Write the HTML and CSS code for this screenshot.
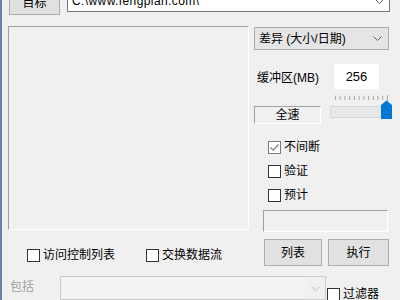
FILE: index.html
```html
<!DOCTYPE html>
<html lang="zh-CN">
<head>
    <meta charset="UTF-8">
    <title>复制</title>
    <link rel="stylesheet" href="styles.css">
</head>
<body>

    <div class="target-row">
        <button class="btn btn-target">目标</button>
        <div class="path-combo">
            <span class="path-text">C:\www.fengpian.com\</span>
            <svg class="chevron" width="9" height="5" viewBox="0 0 9 5"><path d="M0.5 0.5 L4.5 4.5 L8.5 0.5" fill="none" stroke="#606060"/></svg>
        </div>
    </div>

    <div class="main">
        <div class="left-col">
            <div class="panel sunken"></div>
            <div class="options">
                <label class="check"><span class="box"></span>访问控制列表</label>
                <label class="check"><span class="box"></span>交换数据流</label>
            </div>
        </div>

        <div class="side">
            <div class="mode-combo">
                <span>差异 (大小/日期)</span>
                <svg class="chevron" width="9" height="5" viewBox="0 0 9 5"><path d="M0.5 0.5 L4.5 4.5 L8.5 0.5" fill="none" stroke="#606060"/></svg>
            </div>

            <div class="buffer-row">
                <span class="buffer-label">缓冲区(MB)</span>
                <div class="num-box">256</div>
            </div>

            <div class="speed-row">
                <div class="speed sunken">全速</div>
                <svg class="slider" width="62" height="25" viewBox="0 0 62 25">
                    <g stroke="#a8a8a8" stroke-width="1">
                        <path d="M5.5 1 V5 M10.2 1 V5 M14.9 1 V5 M19.7 1 V5 M24.4 1 V5 M29.1 1 V5 M33.8 1 V5 M38.6 1 V5 M43.3 1 V5 M48 1 V5 M52.7 1 V5"/>
                        <path d="M57.5 0 V6"/>
                    </g>
                    <rect x="0.5" y="11.5" width="54" height="11" fill="#e7e7e7" stroke="#d6d6d6"/>
                    <path d="M51 10 L56.5 5.5 L62 10 V24 H51 Z" fill="#0078d7"/>
                </svg>
            </div>

            <div class="checks">
                <label class="check checked"><span class="box"><svg width="11" height="11" viewBox="0 0 11 11"><path d="M1.5 5.5 L4.2 8.2 L9.5 2.5" fill="none" stroke="#7a7a7a" stroke-width="1.2"/></svg></span>不间断</label>
                <label class="check"><span class="box"></span>验证</label>
                <label class="check"><span class="box"></span>预计</label>
            </div>

            <div class="status sunken"></div>

            <div class="actions">
                <button class="btn btn-list">列表</button>
                <button class="btn btn-run">执行</button>
            </div>
        </div>
    </div>

    <div class="filter-row">
        <span class="muted">包括</span>
        <div class="filter-combo">
            <div class="filter-field"></div>
            <svg class="chevron" width="9" height="5" viewBox="0 0 9 5"><path d="M0.5 0.5 L4.5 4.5 L8.5 0.5" fill="none" stroke="#bcbcbc"/></svg>
        </div>
        <label class="check filter-check"><span class="box"></span>过滤器</label>
    </div>

</body>
</html>
```

FILE: styles.css
```css
body {
    margin: 0;
    width: 398px;
    height: 300px;
    overflow: hidden;
    background-color: #f0f0f0;
    border-left: 2px solid #6d7fa5; /* window frame edge */
    font-family: "Liberation Sans", "Noto Sans CJK SC", sans-serif;
    font-size: 12px;
    color: #000000;
}

.btn {
    box-sizing: border-box;
    padding: 0;
    background-color: #e1e1e1;
    border: 1px solid #adadad;
    font-family: "Liberation Sans", "Noto Sans CJK SC", sans-serif;
    font-size: 12px;
    color: #000000;
    line-height: 14px;
}

.sunken {
    box-sizing: border-box;
    border-top: 1px solid #a0a0a0;
    border-left: 1px solid #a0a0a0;
    border-right: 1px solid #ffffff;
    border-bottom: 1px solid #ffffff;
}

.chevron {
    display: block;
}

/* top row, scrolled partly out of view */
.target-row {
    display: flex;
    align-items: flex-start;
    margin-top: -10px;
    padding-left: 7px;
    gap: 7px;
}

.btn-target {
    width: 51px;
    height: 24px;
    margin-top: 1px;
}

.path-combo {
    box-sizing: border-box;
    display: flex;
    align-items: center;
    justify-content: space-between;
    width: 323px;
    height: 22px;
    padding: 0 5px 0 4px;
    background-color: #ffffff;
    border: 1px solid #7a7a7a;
}

.path-text {
    line-height: 14px;
    letter-spacing: 0.4px;
}

.main {
    display: flex;
    align-items: flex-start;
    gap: 5px;
    margin-top: 11px;
    padding-left: 6px;
}

.left-col {
    width: 241px;
}

.panel {
    height: 204px;
}

.options {
    display: grid;
    grid-template-columns: 119px auto;
    margin-top: 19px;
    padding-left: 19px;
}

.check {
    display: flex;
    align-items: center;
    height: 13px;
    line-height: 13px;
    white-space: nowrap;
}

.check .box {
    box-sizing: border-box;
    display: flex;
    align-items: center;
    justify-content: center;
    width: 13px;
    height: 13px;
    margin-right: 3px;
    background-color: #ffffff;
    border: 1px solid #333333;
}

.check.checked .box {
    border-color: #7a7a7a;
}

.side {
    display: flex;
    flex-direction: column;
    align-items: flex-start;
    width: 136px;
}

.mode-combo {
    box-sizing: border-box;
    display: flex;
    align-items: center;
    justify-content: space-between;
    width: 135px;
    height: 23px;
    margin-top: 1px;
    padding: 0 6px 0 4px;
    background-color: #e5e5e5;
    border: 1px solid #acacac;
    line-height: 14px;
}

.buffer-row {
    display: flex;
    align-items: center;
    margin-top: 14px;
    height: 25px;
}

.buffer-label {
    width: 77px;
    padding-left: 3px;
}

.num-box {
    width: 45px;
    height: 25px;
    line-height: 25px;
    text-align: center;
    font-size: 13px;
    background-color: #ffffff;
}

.speed-row {
    display: flex;
    align-items: flex-start;
    margin-top: 6px;
}

.speed {
    width: 67px;
    height: 18px;
    margin-top: 11px;
    line-height: 16px;
    text-align: center;
}

.slider {
    display: block;
    margin-left: 9px;
    overflow: visible;
}

.checks {
    display: flex;
    flex-direction: column;
    gap: 11px;
    margin-top: 17px;
    padding-left: 14px;
}

.status {
    width: 125px;
    height: 22px;
    margin-top: 8px;
    margin-left: 9px;
}

.actions {
    display: flex;
    gap: 6px;
    margin-top: 7px;
    margin-left: 10px;
}

.btn-list {
    width: 58px;
    height: 27px;
}

.btn-run {
    width: 61px;
    height: 27px;
}

.filter-row {
    display: flex;
    align-items: flex-start;
    margin-top: 10px;
    padding-left: 8px;
}

.muted {
    width: 26px;
    margin-top: 4px;
    line-height: 14px;
    color: #a0a0a0;
}

.filter-combo {
    box-sizing: border-box;
    display: flex;
    align-items: center;
    width: 266px;
    height: 24px;
    margin-left: 24px;
    padding: 1px 5px 1px 1px;
    border: 1px solid #cccccc;
    background-color: #f0f0f0;
}

.filter-field {
    flex: 1;
    height: 100%;
    margin-right: 6px;
    background-color: #f3f3f3;
}

.filter-check {
    margin-top: 12px;
    margin-left: 1px;
}
```
